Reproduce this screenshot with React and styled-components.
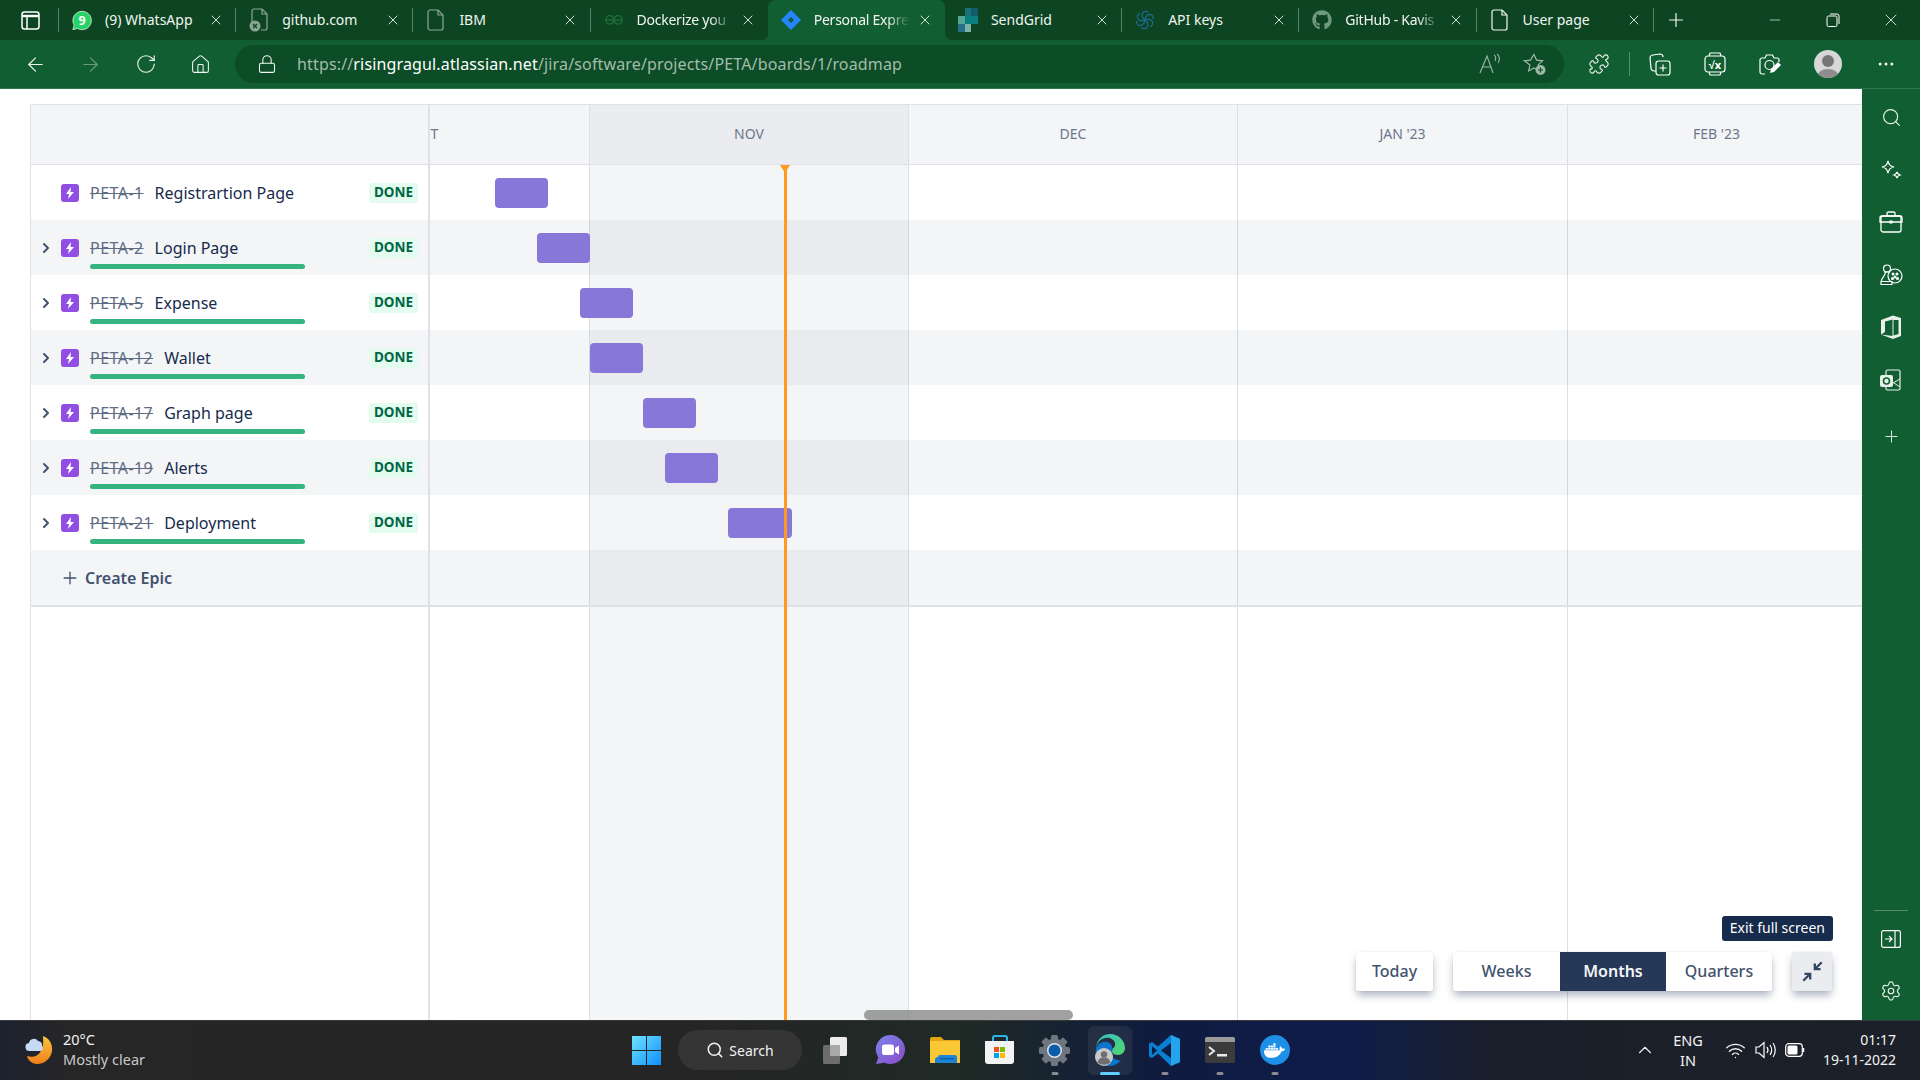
import React from 'react';
import styled, { createGlobalStyle, css } from 'styled-components';
import {
  ArrowLeft, ArrowRight, RotateCw, House, Lock, Puzzle, Plus, X, Minus, Search,
  ChevronRight, ChevronUp, Settings, Wifi, Ellipsis,
} from 'lucide-react';
import { FaGithub, FaDocker } from 'react-icons/fa';

const GlobalStyle = createGlobalStyle`
  html, body { margin: 0; padding: 0; height: 100%; overflow: hidden; background: #fff; }
  * { box-sizing: border-box; }
  body { font-family: "Noto Sans", "Open Sans", sans-serif; }
`;

const Page = styled.div`
  width: 1920px;
  height: 1080px;
  display: flex;
  flex-direction: column;
  overflow: hidden;
`;

/* browser chrome */
const TabStrip = styled.div`
  height: 40px;
  flex: none;
  display: flex;
  align-items: center;
  background: #0d4522;
  color: #f1f5f2;
`;

const TabActions = styled.div`
  width: 59px;
  height: 40px;
  flex: none;
  display: flex;
  align-items: center;
  justify-content: center;
  position: relative;
  padding-left: 1px;
  &::after {
    content: '';
    position: absolute;
    right: 0;
    top: 8px;
    height: 24px;
    width: 1px;
    background: rgba(255, 255, 255, 0.32);
  }
`;

const Tab = styled.div`
  position: relative;
  width: 177.2px;
  height: 40px;
  flex: none;
  display: flex;
  align-items: center;
  ${(p) => p.$sep && css`
    &::after {
      content: '';
      position: absolute;
      right: 0;
      top: 8px;
      height: 24px;
      width: 1px;
      background: rgba(255, 255, 255, 0.32);
    }
  `}
  ${(p) => p.$active && css`
    background: #115e32;
    border-radius: 7px 7px 0 0;
    &::before, &::after {
      content: '';
      position: absolute;
      bottom: 0;
      top: auto;
      width: 7px;
      height: 7px;
    }
    &::before {
      left: -7px;
      background: radial-gradient(circle at 0 0, transparent 7px, #115e32 7.5px);
    }
    &::after {
      right: -7px;
      background: radial-gradient(circle at 100% 0, transparent 7px, #115e32 7.5px);
    }
  `}
`;

const Favicon = styled.span`
  width: 20px;
  height: 20px;
  margin-left: 13px;
  flex: none;
  display: flex;
  align-items: center;
  justify-content: center;
  opacity: ${(p) => p.$dim || 1};
`;

const TabTitle = styled.span`
  width: 96px;
  margin-left: 13px;
  padding-bottom: 2px;
  font-size: 14px;
  white-space: nowrap;
  overflow: hidden;
  ${(p) => p.$fade && css`
    letter-spacing: -0.25px;
    mask-image: linear-gradient(to right, #000 76%, transparent 100%);
  `}
`;

const TabClose = styled.span`
  width: 30px;
  flex: none;
  display: flex;
  justify-content: center;
`;

const NewTab = styled.div`
  width: 44px;
  display: flex;
  justify-content: center;
`;

const WindowButtons = styled.div`
  margin-left: auto;
  display: flex;
`;

const WindowButton = styled.div`
  width: 58px;
  height: 40px;
  display: flex;
  align-items: center;
  justify-content: center;
`;

const Toolbar = styled.div`
  height: 49px;
  flex: none;
  display: flex;
  align-items: flex-start;
  padding: 5px 4px 0 8px;
  background: #115e32;
  border-bottom: 1px solid #2d7a4e;
  color: #f1f5f2;
`;

const ToolButton = styled.div`
  width: ${(p) => p.$w || 55}px;
  height: 38px;
  flex: none;
  display: flex;
  align-items: center;
  justify-content: center;
  opacity: ${(p) => p.$dim || 1};
`;

const AddressBar = styled.div`
  width: 1329px;
  height: 38px;
  margin: 0 7px 0 7px;
  flex: none;
  border-radius: 19px;
  background: #0c4c26;
  display: flex;
  align-items: center;
  padding: 0 7px 0 22px;
`;

const Url = styled.div`
  margin-left: 20px;
  font-size: 16px;
  letter-spacing: 0.15px;
  color: #a3bcab;
  white-space: nowrap;
  b { font-weight: 400; color: #fff; }
`;

const AddressIcons = styled.div`
  margin-left: auto;
  display: flex;
  gap: 0;
  opacity: 0.6;
`;

const ToolbarRule = styled.div`
  width: 1px;
  height: 24px;
  margin: 7px 2px 0 2px;
  flex: none;
  background: rgba(255, 255, 255, 0.3);
`;

const Avatar = styled.div`
  width: 28px;
  height: 28px;
  border-radius: 50%;
  overflow: hidden;
`;

/* page body */
const Body = styled.div`
  flex: 1;
  min-height: 0;
  display: flex;
`;

const Main = styled.main`
  flex: 1;
  min-width: 0;
  padding: 15px 0 0 30px;
  background: #fff;
`;

const Sidebar = styled.aside`
  width: 58px;
  flex: none;
  display: flex;
  flex-direction: column;
  align-items: center;
  padding: 2px 0 3px;
  background: #115e32;
  color: #e9f0eb;
`;

const SideButton = styled.div`
  width: 58px;
  height: ${(p) => p.$h || 52.5}px;
  flex: none;
  display: flex;
  align-items: center;
  justify-content: center;
`;

const SideRule = styled.div`
  width: 34px;
  height: 1px;
  margin-top: auto;
  margin-bottom: 2px;
  background: rgba(255, 255, 255, 0.28);
`;

/* roadmap */
const Panel = styled.section`
  position: relative;
  height: 100%;
  display: flex;
`;

const ListColumn = styled.div`
  width: 400px;
  flex: none;
  height: 100%;
  border-left: 1px solid #dfe1e6;
  border-right: 2px solid #dfe1e6;
`;

const ListHeader = styled.div`
  height: 61px;
  background: #f4f5f7;
  border-top: 1px solid #dfe1e6;
  border-bottom: 1px solid #dfe1e6;
  border-top-left-radius: 3px;
`;

const EpicRow = styled.div`
  position: relative;
  height: 55px;
  display: flex;
  align-items: center;
  background: ${(p) => (p.$striped ? '#f4f5f7' : '#fff')};
  color: #172b4d;
`;

const Expander = styled.span`
  width: 30px;
  flex: none;
  display: flex;
  justify-content: center;
  padding-right: 1px;
  color: #42526e;
`;

const EpicIcon = styled.span`
  width: 18px;
  height: 18px;
  flex: none;
  border-radius: 3px;
  background: #904ee2;
  display: flex;
  align-items: center;
  justify-content: center;
`;

const EpicKey = styled.span`
  margin-left: 11px;
  font-size: 16px;
  letter-spacing: 0.45px;
  color: #5e6c84;
  text-decoration: line-through;
  white-space: nowrap;
`;

const EpicTitle = styled.span`
  margin-left: 11px;
  font-size: 16px;
  white-space: nowrap;
`;

const Lozenge = styled.span`
  position: absolute;
  left: 338px;
  top: 18px;
  width: 49px;
  height: 20px;
  border-radius: 3px;
  background: #e3fcef;
  color: #006644;
  font-size: 13.5px;
  line-height: 19px;
  font-weight: 700;
  text-align: center;
`;

const Progress = styled.span`
  position: absolute;
  left: 59px;
  top: 44px;
  width: 215px;
  height: 5px;
  border-radius: 3px;
  background: #36b37e;
`;

const CreateRow = styled.div`
  height: 57px;
  padding: 0 0 0 29px;
  display: flex;
  align-items: center;
  gap: 5px;
  background: #f4f5f7;
  border-bottom: 2px solid #dfe1e6;
  color: #42526e;
  font-size: 16px;
  font-weight: 600;
`;

const Timeline = styled.div`
  flex: 1;
  min-width: 0;
  height: 100%;
  overflow: hidden;
`;

const TimelineInner = styled.div`
  position: relative;
  width: 1606px;
  height: 100%;
  margin-left: -170px;
`;

const MonthColumns = styled.div`
  position: absolute;
  inset: 0;
  display: flex;
`;

const MonthColumn = styled.div`
  width: ${(p) => p.$w}px;
  flex: none;
  background: ${(p) => (p.$current ? '#f4f5f7' : 'transparent')};
  border-right: 1px solid #dcdfe4;
`;

const MonthHeader = styled.div`
  position: relative;
  height: 61px;
  display: flex;
  border-top: 1px solid #dfe1e6;
  border-bottom: 1px solid #dfe1e6;
  background: #f4f5f7;
`;

const MonthLabel = styled.div`
  width: ${(p) => p.$w}px;
  flex: none;
  display: flex;
  align-items: center;
  justify-content: center;
  padding-bottom: 2px;
  font-size: 14px;
  color: #6b778c;
  background: ${(p) => (p.$current ? '#ebecf0' : 'transparent')};
  border-right: 1px solid #dcdfe4;
`;

const TimelineRow = styled.div`
  position: relative;
  height: ${(p) => (p.$last ? 57 : 55)}px;
  background: ${(p) => (p.$striped ? 'rgba(9, 30, 66, 0.045)' : 'transparent')};
  ${(p) => p.$last && css`border-bottom: 2px solid #dfe1e6;`}
`;

const Bar = styled.div`
  position: absolute;
  top: 13px;
  left: ${(p) => p.$left}px;
  width: ${(p) => p.$w}px;
  height: 30px;
  border-radius: 4px;
  background: #8777d9;
`;

const TodayLine = styled.div`
  position: absolute;
  top: 61px;
  bottom: 0;
  left: 524px;
  width: 3px;
  background: #ff991f;
  &::before {
    content: '';
    position: absolute;
    top: 0;
    left: -4px;
    border-left: 5.5px solid transparent;
    border-right: 5.5px solid transparent;
    border-top: 8px solid #ff991f;
  }
`;

const ScrollThumb = styled.div`
  position: absolute;
  left: 834px;
  bottom: 0;
  width: 209px;
  height: 10px;
  border-radius: 5px;
  background: rgba(130, 130, 130, 0.75);
`;

const Controls = styled.div`
  position: absolute;
  right: 30px;
  bottom: 29px;
  display: flex;
  gap: 20px;
`;

const ControlGroup = styled.div`
  height: 39px;
  display: flex;
  border-radius: 3px;
  overflow: hidden;
  background: #fff;
  box-shadow: 0 5px 8px -1px rgba(9, 30, 66, 0.35), 0 0 1px rgba(9, 30, 66, 0.2);
`;

const ControlButton = styled.div`
  width: ${(p) => p.$w}px;
  display: flex;
  align-items: center;
  justify-content: center;
  padding-bottom: 1px;
  font-size: 16px;
  font-weight: ${(p) => (p.$selected ? 600 : 500)};
  color: ${(p) => (p.$selected ? '#f4f5f7' : '#42526e')};
  background: ${(p) => (p.$selected ? '#253858' : p.$muted ? '#ebecf0' : '#fff')};
`;

const Tooltip = styled.div`
  position: absolute;
  right: -1px;
  bottom: 50px;
  height: 25px;
  padding: 0 8px;
  border-radius: 3px;
  background: #172b4d;
  color: #fff;
  font-size: 14px;
  line-height: 24px;
  white-space: nowrap;
`;

/* taskbar */
const Taskbar = styled.footer`
  height: 60px;
  flex: none;
  display: flex;
  align-items: center;
  padding-bottom: 1px;
  color: #f3f3f3;
  border-top: 1px solid #3a3a3c;
  background: linear-gradient(90deg, #1d2230 0, #262626 70px, #252525 700px, #1f2a25 960px, #0f1b3f 1160px, #0f1c4a 1340px, #1a1f2b 1500px, #1c2028 1920px);
`;

const Weather = styled.div`
  width: 619px;
  flex: none;
  display: flex;
  align-items: center;
  gap: 9px;
  padding: 0 0 2px 24px;
`;

const WeatherText = styled.div`
  font-size: 14.5px;
  line-height: 20px;
  div + div { color: #c9c9c9; }
`;

const TaskCell = styled.div`
  position: relative;
  width: 55px;
  height: 49px;
  flex: none;
  display: flex;
  align-items: center;
  justify-content: center;
  ${(p) => p.$active && css`
    border-radius: 6px;
    background: rgba(255, 255, 255, 0.07);
    box-shadow: 4px 0 0 -2px rgba(255, 255, 255, 0.05);
    width: 43px;
    margin: 0 6px;
  `}
`;

const RunDot = styled.span`
  position: absolute;
  left: 50%;
  bottom: 0;
  transform: translateX(-50%);
  width: ${(p) => (p.$active ? 20 : 7)}px;
  height: 3px;
  border-radius: 2px;
  background: ${(p) => (p.$active ? '#60cdff' : '#8b8b8f')};
`;

const SearchPill = styled.div`
  width: 124px;
  height: 40px;
  margin: 0 5px 0 4px;
  flex: none;
  display: flex;
  align-items: center;
  justify-content: center;
  gap: 5px;
  border-radius: 20px;
  background: #353535;
  font-size: 14px;
`;

const Tray = styled.div`
  margin-left: auto;
  display: flex;
  align-items: center;
  padding-right: 24px;
`;

const TrayCell = styled.div`
  width: ${(p) => p.$w || 30}px;
  flex: none;
  display: flex;
  justify-content: center;
  align-items: center;
`;

const LangText = styled.div`
  width: 56px;
  margin-right: 4px;
  flex: none;
  font-size: 14.5px;
  line-height: 20px;
  text-align: center;
`;

const ClockText = styled.div`
  width: 86px;
  flex: none;
  font-size: 14px;
  line-height: 20px;
  text-align: right;
`;

/* drawings */
const WhatsAppIcon = () => (
  <svg width="21" height="21" viewBox="0 0 24 24">
    <path d="M12 1a11 11 0 0 0-9.500 16.500L1 23l5.700-1.500A11 11 0 1 0 12 1z" fill="#25d366" stroke="#fff" strokeWidth="0.8" />
    <text x="12" y="17" textAnchor="middle" fontSize="15" fontWeight="700" fill="#fff" fontFamily="Noto Sans, sans-serif">9</text>
  </svg>
);

const FileIcon = () => (
  <svg width="18" height="22" viewBox="0 0 18 22" fill="none" stroke="currentColor" strokeWidth="1.2">
    <path d="M3 1h8l5 5v13a2 2 0 0 1-2 2H3a2 2 0 0 1-2-2V3a2 2 0 0 1 2-2z" />
    <path d="M11 1v5h5" />
  </svg>
);

const BlockedFileIcon = () => (
  <svg width="20" height="24" viewBox="0 0 20 24" fill="none">
    <path d="M3 15V3a2 2 0 0 1 2-2h8l5 5v14a2 2 0 0 1-2 2h-4M13 1v5h5" stroke="currentColor" strokeWidth="1.2" />
    <circle cx="6" cy="18" r="5.500" fill="currentColor" />
    <path d="M4 16l4 4M8 16l-4 4" stroke="#0d4522" strokeWidth="1.4" />
  </svg>
);

const GfgIcon = () => (
  <svg width="20" height="12" viewBox="0 0 20 12" fill="none" stroke="#2f8d46" strokeWidth="1.4">
    <path d="M1 6h18M10 6c-1-6-8-6-8 0s7 5 8 0c1 5 8 6 8 0s-7-6-8 0" />
  </svg>
);

const JiraIcon = () => (
  <svg width="20" height="20" viewBox="0 0 20 20">
    <path d="M10 0l10 10-10 10L0 10z" fill="#2684ff" />
    <path d="M10 7l3 3-3 3-3-3z" fill="#115e32" />
  </svg>
);

const SendGridIcon = () => (
  <svg width="20" height="24" viewBox="0 0 20 24">
    <rect x="7" y="0" width="13" height="8" fill="#1c6f7a" />
    <rect x="13" y="0" width="7" height="8" fill="#0f5d68" />
    <rect x="7" y="8" width="13" height="8" fill="#0b7f80" />
    <rect x="0" y="8" width="7" height="8" fill="#57a596" />
    <rect x="0" y="16" width="7" height="8" fill="#2a6f8a" />
    <rect x="7" y="16" width="6" height="8" fill="#7ab5a8" />
  </svg>
);

const SwirlIcon = () => (
  <svg width="20" height="22" viewBox="0 0 24 24" fill="none" stroke="#1a6a8c" strokeWidth="1.6">
    {[0, 60, 120, 180, 240, 300].map((a) => (
      <path key={a} d="M12 12c-3-2-4-5-3-8s5-3 7-1" transform={`rotate(${a} 12 12)`} />
    ))}
  </svg>
);

const EdgeLogo = () => (
  <svg width="32" height="34" viewBox="0 0 32 34">
    <defs>
      <linearGradient id="edgeA" x1="0" y1="0" x2="1" y2="1">
        <stop offset="0" stopColor="#35c1c6" />
        <stop offset="1" stopColor="#52d66b" />
      </linearGradient>
    </defs>
    <path d="M2 15C3 6 9 1 16 1c9 0 15 7 15 14 0 4-3 7-7 7-2 0-6-1-6-4 0-4 4-3 3-8-1-4-6-6-10-5-5 1-8 5-9 10z" fill="url(#edgeA)" />
    <path d="M2 15c2-4 6-7 11-6 4 1 6 4 5 9-1 7 4 10 9 9-3 4-7 6-12 6C7 33 0 25 2 15z" fill="#0c74c9" />
    <circle cx="10" cy="24" r="9" fill="#c9c9c9" />
    <circle cx="10" cy="21.500" r="3.200" fill="#6f6f6f" />
    <path d="M3.500 29.500c1-4 3.500-5 6.500-5s5.500 1 6.500 5c-3.500 3-9.500 3-13 0z" fill="#6f6f6f" />
  </svg>
);

const ChatIcon = () => (
  <svg width="30" height="30" viewBox="0 0 30 30">
    <defs>
      <linearGradient id="chatA" x1="0" y1="0" x2="1" y2="1">
        <stop offset="0" stopColor="#7b83eb" />
        <stop offset="1" stopColor="#8a4cc7" />
      </linearGradient>
    </defs>
    <path d="M15.500 0a14.500 14.500 0 1 1-6 27.700L1 29l2.300-6.500A14.500 14.500 0 0 1 15.500 0z" fill="url(#chatA)" />
    <rect x="7" y="9.500" width="12" height="10.500" rx="2.500" fill="#fff" />
    <path d="M20 13l4-2.500v9L20 17z" fill="#fff" />
  </svg>
);

const FolderIcon = () => (
  <svg width="30" height="26" viewBox="0 0 30 26">
    <path d="M0 2a2 2 0 0 1 2-2h9l3 3h16v23H0z" fill="#e3a40e" />
    <rect x="0" y="4" width="30" height="22" fill="#fbc735" />
    <path d="M5 23a3 3 0 0 1 3-3V20a2 2 0 0 1 2-2h15a2 2 0 0 1 2 2v6H5z" fill="#1c84d6" />
    <rect x="10" y="21" width="14" height="1.500" fill="#0b5fa8" />
  </svg>
);

const StoreIcon = () => (
  <svg width="30" height="30" viewBox="0 0 30 30">
    <path d="M8 6V2.500C8 1.500 9 1 10 1h10c1 0 2 .5 2 1.500V6" fill="none" stroke="#2ab7e6" strokeWidth="2" />
    <path d="M0 6h29v20a3 3 0 0 1-3 3H3a3 3 0 0 1-3-3z" fill="#f3f3f3" />
    <rect x="9" y="12" width="5" height="5" fill="#f25022" />
    <rect x="15" y="12" width="5" height="5" fill="#7fba00" />
    <rect x="9" y="18" width="5" height="5" fill="#00a4ef" />
    <rect x="15" y="18" width="5" height="5" fill="#ffb900" />
  </svg>
);

const GearIcon = () => (
  <svg width="31" height="31" viewBox="0 0 31 31">
    {[0, 45, 90, 135, 180, 225, 270, 315].map((a) => (
      <rect key={a} x="12" y="0" width="7" height="8" rx="1.500" fill="#6e7680" transform={`rotate(${a} 15.500 15.500)`} />
    ))}
    <circle cx="15.500" cy="15.500" r="12" fill="#6e7680" />
    <circle cx="15.500" cy="15.500" r="7.500" fill="#e1e4e8" />
    <circle cx="15.500" cy="15.500" r="6" fill="#0b5cab" />
  </svg>
);

const VsCodeIcon = () => (
  <svg width="31" height="31" viewBox="0 0 31 31">
    <path d="M22 0l9 4v23l-9 4-13-12.500-6 4.500-3-1.500v-13L3 7l6 4.500z" fill="#0a7fd1" />
    <path d="M22 8L12 15.500 22 23z" fill="#0d1c42" />
    <path d="M22 0l9 4v23l-9 4z" fill="#25a4ee" />
    <path d="M3 11l5 4.500-5 4.500z" fill="#0d1c42" />
  </svg>
);

const TerminalIcon = () => (
  <svg width="30" height="26" viewBox="0 0 30 26">
    <rect width="30" height="26" rx="2" fill="#3b3b3b" />
    <path d="M2 0h26a2 2 0 0 1 2 2v3H0V2a2 2 0 0 1 2-2z" fill="#9a9a9a" />
    <path d="M4 10l5 4-5 4" stroke="#e8e8e8" strokeWidth="2" fill="none" />
    <rect x="12" y="17" width="10" height="2.500" fill="#e8e8e8" />
  </svg>
);

const DockerBadge = styled.span`
  width: 30px;
  height: 30px;
  border-radius: 50%;
  background: #1d8fe6;
  color: #fff;
  display: flex;
  align-items: center;
  justify-content: center;
`;

const WinLogo = () => (
  <svg width="29" height="29" viewBox="0 0 29 29">
    <defs>
      <linearGradient id="winA" x1="0" y1="0" x2="1" y2="1">
        <stop offset="0" stopColor="#6fe3ff" />
        <stop offset="1" stopColor="#0f8fff" />
      </linearGradient>
    </defs>
    <path d="M0 0h14v14H0zM15 0h14v14H15zM0 15h14v14H0zM15 15h14v14H15z" fill="url(#winA)" />
  </svg>
);

const WeatherIcon = () => (
  <svg width="30" height="32" viewBox="0 0 30 32">
    <defs>
      <linearGradient id="moonA" x1="0" y1="0" x2="0" y2="1">
        <stop offset="0" stopColor="#fcc63f" />
        <stop offset="1" stopColor="#ef7f1a" />
      </linearGradient>
    </defs>
    <path d="M19 3c6 2 10 8 9 15-1 8-9 14-16 13-5-1-8-4-9-8 8 3 18-2 16-20z" fill="url(#moonA)" />
    <path d="M6 18a4 4 0 0 1-1-8 5 5 0 0 1 9-2 4 4 0 0 1 4 5 3 3 0 0 1-1 5z" fill="#c7daf5" />
  </svg>
);

const TaskViewIcon = () => (
  <svg width="24" height="27" viewBox="0 0 24 27">
    <rect x="0" y="8" width="17" height="19" rx="1.500" fill="#6d6d6d" />
    <rect x="7" y="0" width="17" height="19" rx="1.500" fill="#ececec" />
    <rect x="7" y="8" width="10" height="11" fill="#a8a8a8" />
  </svg>
);

const ReadAloudIcon = () => (
  <svg width="24" height="22" viewBox="0 0 24 22" fill="none" stroke="#fff" strokeWidth="1.100">
    <path d="M2 20L9 3l6 17M4.500 14h9" />
    <path d="M16 2c2 1 2 4 1 6M19 1c3 2 3 6 1 9" />
  </svg>
);

const StarAddIcon = () => (
  <svg width="24" height="24" viewBox="0 0 24 24" fill="none" stroke="#fff" strokeWidth="1.200">
    <path d="M11 2.500l2.600 5.600 6 .7-4.500 4.100 1.200 6-5.300-3-5.300 3 1.200-6L1.400 8.800l6-.7z" />
    <circle cx="17.500" cy="18" r="5" fill="#fff" stroke="none" />
    <path d="M17.500 15.500v5M15 18h5" stroke="#0c4c26" />
  </svg>
);

const CollectionsIcon = () => (
  <svg width="22" height="24" viewBox="0 0 22 24" fill="none" stroke="#fff" strokeWidth="1.200">
    <path d="M7 19H5a3 3 0 0 1-3-3L1 6a3 3 0 0 1 3-3l7-1a3 3 0 0 1 3 3" />
    <rect x="7" y="9" width="14" height="14" rx="2.500" />
    <path d="M14 12.500v7M10.500 16h7" />
  </svg>
);

const MathIcon = () => (
  <svg width="22" height="24" viewBox="0 0 22 24" fill="none" stroke="#fff" strokeWidth="1.200">
    <path d="M5 4l1-3h10l1 3M5 20l1 3h10l1-3" />
    <rect x="1" y="4" width="20" height="16" rx="3" />
    <text x="11" y="16.500" textAnchor="middle" fontSize="11" fontWeight="700" fill="#fff" stroke="none" fontFamily="Noto Sans, sans-serif">√x</text>
  </svg>
);

const DrawIcon = () => (
  <svg width="24" height="24" viewBox="0 0 24 24" fill="none" stroke="#fff" strokeWidth="1.200">
    <path d="M7 22H4a2 2 0 0 1-2-2V8a2 2 0 0 1 2-2h3l1.500-3h6L16 6h3a2 2 0 0 1 2 2v2" />
    <circle cx="11.500" cy="13" r="4.500" />
    <path d="M12 21l1-4 7-7 3 3-7 7z" fill="#fff" stroke="none" />
  </svg>
);

const AvatarImage = () => (
  <svg width="28" height="28" viewBox="0 0 28 28">
    <rect width="28" height="28" fill="#d7d7d7" />
    <circle cx="14" cy="11" r="6" fill="#767676" />
    <ellipse cx="14" cy="27" rx="11" ry="8" fill="#8d8d8d" />
  </svg>
);

const SparkIcon = () => (
  <svg width="22" height="22" viewBox="0 0 22 22" fill="none" stroke="#fff" strokeWidth="1.200">
    <path d="M8 2c1 4 2 5 6 6-4 1-5 2-6 6-1-4-2-5-6-6 4-1 5-2 6-6z" />
    <path d="M17 13c.4 1.800 1 2.400 3 3-2 .6-2.600 1.200-3 3-.4-1.800-1-2.400-3-3 2-.6 2.600-1.200 3-3z" />
  </svg>
);

const BriefcaseIcon = () => (
  <svg width="24" height="22" viewBox="0 0 24 22" fill="none" stroke="#fff" strokeWidth="1.300">
    <path d="M8 5V2.500A1.500 1.500 0 0 1 9.500 1h5A1.500 1.500 0 0 1 16 2.500V5" />
    <rect x="2" y="5" width="20" height="16" rx="2" />
    <path d="M1 6.500A1.500 1.500 0 0 1 2.500 5h19A1.500 1.500 0 0 1 23 6.500V11H1z" />
    <rect x="10.500" y="9.500" width="3" height="3" fill="#fff" stroke="none" />
  </svg>
);

const ChessIcon = () => (
  <svg width="24" height="22" viewBox="0 0 24 22" fill="none" stroke="#fff" strokeWidth="1.200">
    <circle cx="8" cy="4.500" r="3.500" />
    <path d="M5 8h6M6.500 8c0 3-2.500 5-4 8v2M2 20.500h11v-3H2z" />
    <circle cx="16" cy="12" r="7" />
    <circle cx="14" cy="10" r="0.900" fill="#fff" />
    <circle cx="18" cy="10" r="0.900" fill="#fff" />
    <circle cx="16" cy="13" r="0.900" fill="#fff" />
    <circle cx="13.500" cy="14.500" r="0.900" fill="#fff" />
    <circle cx="18.500" cy="14.500" r="0.900" fill="#fff" />
  </svg>
);

const OfficeIcon = () => (
  <svg width="22" height="24" viewBox="0 0 22 24">
    <path d="M1 5l12-4.500L21 3v18l-8 3L1 19.500l12 1.500V4.500L5 6.500V17L1 19.500z" fill="#e9f0eb" />
    <path d="M13 4.500l6 0v15l-6 1.500z" fill="#115e32" stroke="#e9f0eb" />
  </svg>
);

const OutlookIcon = () => (
  <svg width="22" height="22" viewBox="0 0 22 22" fill="none">
    <rect x="6" y="1" width="14" height="20" rx="1.500" stroke="#e9f0eb" strokeWidth="1.200" />
    <path d="M11 12l9 6M20 10l-7 4" stroke="#e9f0eb" />
    <rect x="0" y="6" width="13" height="12" rx="2" fill="#e9f0eb" />
    <circle cx="6.500" cy="12" r="3" stroke="#115e32" strokeWidth="1.600" />
  </svg>
);

const PanelInIcon = () => (
  <svg width="20" height="18" viewBox="0 0 20 18" fill="none" stroke="#fff" strokeWidth="1.200">
    <rect x="0.600" y="0.600" width="18.800" height="16.800" rx="2" />
    <path d="M14 1v16M4 9h7M8 6l3 3-3 3" />
  </svg>
);

const LayoutIcon = () => (
  <svg width="19" height="19" viewBox="0 0 19 19" fill="none" stroke="#fff" strokeWidth="1.500">
    <rect x="1" y="1" width="17" height="17" rx="2.500" />
    <path d="M1 5h17" strokeWidth="2.400" />
    <path d="M6 5v13" />
  </svg>
);

const CollapseIcon = () => (
  <svg width="23" height="23" viewBox="0 0 20 20" fill="none" stroke="#344563" strokeWidth="2">
    <path d="M18 2l-6 6M12 3v5h5" />
    <path d="M2 18l6-6M3 12h5v5" />
  </svg>
);

const BoltIcon = () => (
  <svg width="10" height="12" viewBox="0 0 10 12">
    <path d="M6 0L1 7h3l-1 5 6-7H5.500z" fill="#fff" />
  </svg>
);

const BatteryIcon = () => (
  <svg width="20" height="14" viewBox="0 0 20 14" fill="none">
    <rect x="0.700" y="0.700" width="16.600" height="12.600" rx="3" stroke="#fff" strokeWidth="1.200" />
    <rect x="2.500" y="2.500" width="10" height="9" rx="1.500" fill="#fff" />
    <path d="M18.500 5v4" stroke="#fff" strokeWidth="1.500" />
  </svg>
);

const SpeakerIcon = () => (
  <svg width="21" height="18" viewBox="0 0 21 18" fill="none" stroke="#fff" strokeWidth="1.200">
    <path d="M1 6h3l5-4.500v15L4 12H1z" />
    <path d="M12 6c1.200 1.800 1.200 4.200 0 6M15 4c2 3 2 7 0 10M18 2c3 4 3 10 0 14" />
  </svg>
);

const tabs = [
  { title: '(9) WhatsApp', icon: <WhatsAppIcon />, sep: true },
  { title: 'github.com', icon: <BlockedFileIcon />, dim: 0.55, sep: true },
  { title: 'IBM', icon: <FileIcon />, dim: 0.55, sep: true },
  { title: 'Dockerize you', icon: <GfgIcon />, dim: 0.5, fade: true },
  { title: 'Personal Expre', icon: <JiraIcon />, fade: true, active: true },
  { title: 'SendGrid', icon: <SendGridIcon />, sep: true },
  { title: 'API keys', icon: <SwirlIcon />, sep: true },
  { title: 'GitHub - Kavis', icon: <FaGithub size={20} color="#6f9a80" />, fade: true, sep: true },
  { title: 'User page', icon: <FileIcon />, sep: true },
];

const months = [
  { label: 'OCT', w: 330 },
  { label: 'NOV', w: 319, current: true },
  { label: 'DEC', w: 329 },
  { label: "JAN '23", w: 330 },
  { label: "FEB '23", w: 298 },
];

const epics = [
  { key: 'PETA-1', title: 'Registrartion Page', left: 235, w: 53, child: false },
  { key: 'PETA-2', title: 'Login Page', left: 277, w: 53, child: true },
  { key: 'PETA-5', title: 'Expense', left: 320, w: 53, child: true },
  { key: 'PETA-12', title: 'Wallet', left: 330, w: 53, child: true },
  { key: 'PETA-17', title: 'Graph page', left: 383, w: 53, child: true },
  { key: 'PETA-19', title: 'Alerts', left: 405, w: 53, child: true },
  { key: 'PETA-21', title: 'Deployment', left: 468, w: 64, child: true },
];

const taskApps = [
  { id: 'view', icon: <TaskViewIcon /> },
  { id: 'chat', icon: <ChatIcon /> },
  { id: 'files', icon: <FolderIcon /> },
  { id: 'store', icon: <StoreIcon /> },
  { id: 'gear', icon: <GearIcon />, running: true },
  { id: 'edge', icon: <EdgeLogo />, running: true, active: true },
  { id: 'code', icon: <VsCodeIcon />, running: true },
  { id: 'term', icon: <TerminalIcon />, running: true },
  { id: 'docker', icon: <DockerBadge><FaDocker size={21} /></DockerBadge>, running: true },
];

const App = () => (
  <Page>
    <GlobalStyle />
    <TabStrip>
      <TabActions><LayoutIcon /></TabActions>
      {tabs.map((t) => (
        <Tab key={t.title} $active={t.active} $sep={t.sep}>
          <Favicon $dim={t.dim}>{t.icon}</Favicon>
          <TabTitle $fade={t.fade}>{t.title}</TabTitle>
          <TabClose><X size={16} strokeWidth={1.3} /></TabClose>
        </Tab>
      ))}
      <NewTab><Plus size={22} strokeWidth={1.3} /></NewTab>
      <WindowButtons>
        <WindowButton><Minus size={16} strokeWidth={1} /></WindowButton>
        <WindowButton>
          <svg width="14" height="14" viewBox="0 0 14 14" fill="none" stroke="#fff" strokeWidth="1">
            <rect x="1" y="3" width="10" height="10.500" rx="1.500" />
            <path d="M4 1h7a2 2 0 0 1 2 2v8" />
          </svg>
        </WindowButton>
        <WindowButton><X size={20} strokeWidth={1} /></WindowButton>
      </WindowButtons>
    </TabStrip>

    <Toolbar>
      <ToolButton><ArrowLeft size={23} strokeWidth={1.2} /></ToolButton>
      <ToolButton $dim={0.4}><ArrowRight size={23} strokeWidth={1.2} /></ToolButton>
      <ToolButton><RotateCw size={22} strokeWidth={1.2} /></ToolButton>
      <ToolButton><House size={21} strokeWidth={1.2} /></ToolButton>
      <AddressBar>
        <Lock size={20} strokeWidth={1.3} />
        <Url>https://<b>risingragul.atlassian.net</b>/jira/software/projects/PETA/boards/1/roadmap</Url>
        <AddressIcons>
          <ToolButton $w={45}><ReadAloudIcon /></ToolButton>
          <ToolButton $w={45}><StarAddIcon /></ToolButton>
        </AddressIcons>
      </AddressBar>
      <ToolButton $w={56}><Puzzle size={22} strokeWidth={1.2} /></ToolButton>
      <ToolbarRule />
      <ToolButton><CollectionsIcon /></ToolButton>
      <ToolButton><MathIcon /></ToolButton>
      <ToolButton><DrawIcon /></ToolButton>
      <ToolButton $w={61}><Avatar><AvatarImage /></Avatar></ToolButton>
      <ToolButton><Ellipsis size={20} strokeWidth={1.6} /></ToolButton>
    </Toolbar>

    <Body>
      <Main>
        <Panel>
          <ListColumn>
            <ListHeader />
            {epics.map((e, i) => (
              <EpicRow key={e.key} $striped={i % 2 === 1}>
                <Expander>{e.child && <ChevronRight size={16} strokeWidth={3} />}</Expander>
                <EpicIcon><BoltIcon /></EpicIcon>
                <EpicKey>{e.key}</EpicKey>
                <EpicTitle>{e.title}</EpicTitle>
                <Lozenge>DONE</Lozenge>
                {e.child && <Progress />}
              </EpicRow>
            ))}
            <CreateRow><Plus size={20} strokeWidth={1.6} />Create Epic</CreateRow>
          </ListColumn>

          <Timeline>
            <TimelineInner>
              <MonthColumns>
                {months.map((m) => <MonthColumn key={m.label} $w={m.w} $current={m.current} />)}
              </MonthColumns>
              <MonthHeader>
                {months.map((m) => <MonthLabel key={m.label} $w={m.w} $current={m.current}>{m.label}</MonthLabel>)}
              </MonthHeader>
              {epics.map((e, i) => (
                <TimelineRow key={e.key} $striped={i % 2 === 1}>
                  <Bar $left={e.left} $w={e.w} />
                </TimelineRow>
              ))}
              <TimelineRow $striped $last />
              <TodayLine />
            </TimelineInner>
          </Timeline>

          <ScrollThumb />
          <Controls>
            <ControlGroup><ControlButton $w={77}>Today</ControlButton></ControlGroup>
            <ControlGroup>
              <ControlButton $w={107}>Weeks</ControlButton>
              <ControlButton $w={106} $selected>Months</ControlButton>
              <ControlButton $w={106}>Quarters</ControlButton>
            </ControlGroup>
            <ControlGroup><ControlButton $w={40} $muted><CollapseIcon /></ControlButton></ControlGroup>
            <Tooltip>Exit full screen</Tooltip>
          </Controls>
        </Panel>
      </Main>

      <Sidebar>
        <SideButton><Search size={21} strokeWidth={1.3} /></SideButton>
        <SideButton><SparkIcon /></SideButton>
        <SideButton><BriefcaseIcon /></SideButton>
        <SideButton><ChessIcon /></SideButton>
        <SideButton><OfficeIcon /></SideButton>
        <SideButton><OutlookIcon /></SideButton>
        <SideButton $h={61}><Plus size={19} strokeWidth={1.2} /></SideButton>
        <SideRule />
        <SideButton $h={52}><PanelInIcon /></SideButton>
        <SideButton $h={52}><Settings size={22} strokeWidth={1.3} /></SideButton>
      </Sidebar>
    </Body>

    <Taskbar>
      <Weather>
        <WeatherIcon />
        <WeatherText>
          <div>20°C</div>
          <div>Mostly clear</div>
        </WeatherText>
      </Weather>
      <TaskCell><WinLogo /></TaskCell>
      <SearchPill><Search size={18} strokeWidth={2} />Search</SearchPill>
      {taskApps.map((a) => (
        <TaskCell key={a.id} $active={a.active}>
          {a.icon}
          {a.running && <RunDot $active={a.active} />}
        </TaskCell>
      ))}
      <Tray>
        <TrayCell><ChevronUp size={22} strokeWidth={1.2} /></TrayCell>
        <LangText>
          <div>ENG</div>
          <div>IN</div>
        </LangText>
        <TrayCell><Wifi size={21} strokeWidth={1.6} /></TrayCell>
        <TrayCell><SpeakerIcon /></TrayCell>
        <TrayCell><BatteryIcon /></TrayCell>
        <ClockText>
          <div>01:17</div>
          <div>19-11-2022</div>
        </ClockText>
      </Tray>
    </Taskbar>
  </Page>
);

export default App;
